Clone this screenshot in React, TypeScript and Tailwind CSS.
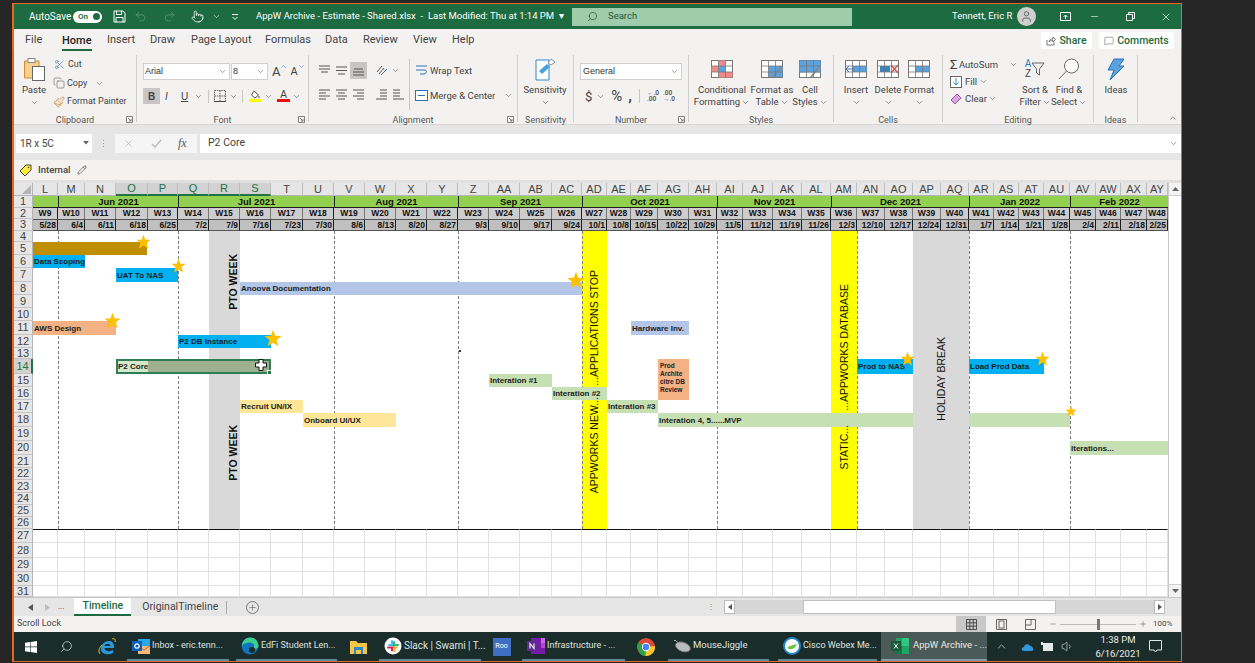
import { ChevronDown, ChevronUp, Copy, MessageSquare, Minus, Paintbrush, Pencil, Plus, Pointer, Redo2, Scissors, Search, Undo2, User, Volume1, X } from 'lucide-react'
import type { ReactNode } from 'react'

const COLS = ['L','M','N','O','P','Q','R','S','T','U','V','W','X','Y','Z','AA','AB','AC','AD','AE','AF','AG','AH','AI','AJ','AK','AL','AM','AN','AO','AP','AQ','AR','AS','AT','AU','AV','AW','AX','AY']
const SELECTED = ['O','P','Q','R','S']
const line = (name: string) => COLS.indexOf(name) + 2
const rowLine = (row: number) => row + 1

const MONTHS = [
  { label: '', from: 'L', to: 'L' },
  { label: 'Jun 2021', from: 'M', to: 'P' },
  { label: 'Jul 2021', from: 'Q', to: 'U' },
  { label: 'Aug 2021', from: 'V', to: 'Y' },
  { label: 'Sep 2021', from: 'Z', to: 'AC' },
  { label: 'Oct 2021', from: 'AD', to: 'AH' },
  { label: 'Nov 2021', from: 'AI', to: 'AL' },
  { label: 'Dec 2021', from: 'AM', to: 'AQ' },
  { label: 'Jan 2022', from: 'AR', to: 'AU' },
  { label: 'Feb 2022', from: 'AV', to: 'AY' },
]
const DATES = ['5/28','6/4','6/11','6/18','6/25','7/2','7/9','7/16','7/23','7/30','8/6','8/13','8/20','8/27','9/3','9/10','9/17','9/24','10/1','10/8','10/15','10/22','10/29','11/5','11/12','11/19','11/26','12/3','12/10','12/17','12/24','12/31','1/7','1/14','1/21','1/28','2/4','2/11','2/18','2/25']
const MONTH_STARTS = ['M','Q','V','Z','AD','AI','AM','AR','AV']
const DASHED = ['M','Q','V','Z','AD','AI','AN','AR','AV']

const BARS = [
  { from: 'L', to: 'O', row: 5, bg: 'bg-[#bf8f00]', text: '', w: 'w-[114px]' },
  { from: 'L', to: 'M', row: 6, bg: 'bg-[#00b0f0]', text: 'Data Scoping', w: '' },
  { from: 'O', to: 'P', row: 7, bg: 'bg-[#00b0f0]', text: 'UAT To NAS', w: '' },
  { from: 'S', to: 'AC', row: 8, bg: 'bg-[#b4c6e7]', text: 'Anoova Documentation', w: '' },
  { from: 'L', to: 'N', row: 11, bg: 'bg-[#f4b183]', text: 'AWS Design', w: '' },
  { from: 'Q', to: 'S', row: 12, bg: 'bg-[#00b0f0]', text: 'P2 DB Instance', w: '' },
  { from: 'AF', to: 'AG', row: 11, bg: 'bg-[#b4c6e7]', text: 'Hardware Inv.', w: '' },
  { from: 'AN', to: 'AO', row: 14, bg: 'bg-[#00b0f0]', text: 'Prod to NAS', w: '' },
  { from: 'AR', to: 'AT', row: 14, bg: 'bg-[#00b0f0]', text: 'Load Prod Data', w: '' },
  { from: 'AA', to: 'AB', row: 15, bg: 'bg-[#c6e0b4]', text: 'Interation #1', w: '' },
  { from: 'AC', to: 'AD', row: 16, bg: 'bg-[#c6e0b4]', text: 'Interation #2', w: '' },
  { from: 'AE', to: 'AF', row: 17, bg: 'bg-[#c6e0b4]', text: 'Interation #3', w: '' },
  { from: 'AG', to: 'AO', row: 18, bg: 'bg-[#c6e0b4]', text: 'Interation 4, 5......MVP', w: '' },
  { from: 'AR', to: 'AU', row: 18, bg: 'bg-[#c6e0b4]', text: '', w: '' },
  { from: 'S', to: 'T', row: 17, bg: 'bg-[#ffe699]', text: 'Recruit UN/IX', w: '' },
  { from: 'U', to: 'W', row: 18, bg: 'bg-[#ffe699]', text: 'Onboard UI/UX', w: '' },
  { from: 'AV', to: 'AY', row: 20, bg: 'bg-[#c6e0b4]', text: 'Iterations...', w: '' },
]

const BANDS = [
  { from: 'R', to: 'R', bg: 'bg-[#d9d9d9]' },
  { from: 'AD', to: 'AD', bg: 'bg-[#ffff00]' },
  { from: 'AM', to: 'AM', bg: 'bg-[#ffff00]' },
  { from: 'AP', to: 'AQ', bg: 'bg-[#d9d9d9]' },
]

const VERTICAL = [
  { text: 'PTO WEEK', col: 'R', to: 'R', row: 6, end: 9, cls: 'font-bold justify-end pr-[2px]' },
  { text: 'PTO WEEK', col: 'R', to: 'R', row: 18, end: 23, cls: 'font-bold justify-end pr-[2px]' },
  { text: '...APPLICATIONS STOP', col: 'AD', to: 'AD', row: 7, end: 15, cls: 'justify-center' },
  { text: 'APPWORKS NEW...', col: 'AD', to: 'AD', row: 17, end: 23, cls: 'justify-center pb-[3px]' },
  { text: '...APPWORKS DATABASE', col: 'AM', to: 'AM', row: 8, end: 17, cls: 'justify-center' },
  { text: 'STATIC...', col: 'AM', to: 'AM', row: 19, end: 21, cls: 'justify-center' },
  { text: 'HOLIDAY BREAK', col: 'AP', to: 'AQ', row: 12, end: 18, cls: 'justify-center pb-[5px]' },
]

const STARS = [
  { x: 143, y: 241, s: 15 }, { x: 178, y: 265, s: 15 }, { x: 112, y: 320, s: 17 }, { x: 273, y: 338, s: 18 },
  { x: 576, y: 280, s: 18 }, { x: 907, y: 358, s: 15 }, { x: 1042, y: 358, s: 15 }, { x: 1071, y: 411, s: 12 },
]

function Chev({ className = '' }: { className?: string }) {
  return <ChevronDown strokeWidth={1.5} className={`h-[9px] w-[9px] shrink-0 text-[#555] ${className}`} />
}

function Star({ x, y, s }: { x: number; y: number; s: number }) {
  return (
    <svg viewBox="0 0 24 24" width={s} height={s} className="absolute" style={{ left: x - 14 - s / 2, top: y - 183 - s / 2 }}>
      <polygon points="12,1 15,9 23.5,9.3 16.8,14.5 19.2,23 12,18.2 4.8,23 7.2,14.5 0.5,9.3 9,9" fill="#ffc000" />
    </svg>
  )
}

function Lines({ rows, className = '' }: { rows: [number, number, number][]; className?: string }) {
  return (
    <svg width="13" height="13" viewBox="0 0 13 13" className={`shrink-0 ${className}`}>
      {rows.map(([a, b, y], i) => <line key={i} x1={a} x2={b} y1={y} y2={y} stroke="#555" strokeWidth="1" />)}
    </svg>
  )
}

function Launcher() {
  return (
    <svg width="7" height="7" viewBox="0 0 7 7" className="absolute bottom-[-1px] right-[3px]">
      <path d="M0.5 0.5H6.5V6.5H0.5Z M2 2L5 5 M5 3V5H3" fill="none" stroke="#666" strokeWidth="0.8" />
    </svg>
  )
}

function Group({ label, launcher, className, children }: { label: string; launcher?: boolean; className: string; children: ReactNode }) {
  return (
    <div className={`relative mt-[3px] flex h-[67px] shrink-0 flex-col border-r border-[#cfcdcb] ${className}`}>
      <div className="flex h-[59px] shrink-0">{children}</div>
      <div className="mt-[1px] h-[10px] shrink-0 text-center text-[9px] leading-[10px] text-[#555]">{label}</div>
      {launcher && <Launcher />}
    </div>
  )
}

function BigBtn({ icon, a, b, className, chevA }: { icon: ReactNode; a: string; b?: string; className: string; chevA?: boolean }) {
  return (
    <div className={`flex shrink-0 flex-col items-center ${className}`}>
      <div className="mt-[2px] flex h-[24px] items-center justify-center">{icon}</div>
      <div className="mt-[3px] whitespace-nowrap text-[9.5px] leading-[12px] text-[#444]">{a}</div>
      {b ? (
        <div className="flex items-center whitespace-nowrap text-[9.5px] leading-[12px] text-[#444]">{b}<Chev className="ml-[1px] h-[8px] w-[8px]" /></div>
      ) : chevA !== false ? <Chev className="mt-[2px]" /> : null}
    </div>
  )
}

function TableIcon({ children, w = 22, h = 18 }: { children?: ReactNode; w?: number; h?: number }) {
  return (
    <svg width={w} height={h} viewBox="0 0 22 18">
      <rect x="0.5" y="0.5" width="21" height="17" fill="#fff" stroke="#777" />
      {children}
      <path d="M0.5 6H21.5 M0.5 12H21.5 M7.5 0.5V17.5 M14.5 0.5V17.5" stroke="#777" strokeWidth="0.8" fill="none" />
    </svg>
  )
}

function TaskItem({ icon, text, className, size = 'text-[9px]' }: { icon: ReactNode; text: string; className: string; size?: string }) {
  return (
    <div className={`flex h-full shrink-0 items-center gap-[2px] border-b-2 border-[#5f8ba0] pl-[5px] ${className}`}>
      <div className="flex h-[18px] w-[18px] shrink-0 items-center justify-center">{icon}</div>
      <span className={`whitespace-nowrap text-[#dfe5e3] ${size}`}>{text}</span>
    </div>
  )
}

function Sheet() {
  return (
    <div className="relative flex h-[414px] shrink-0">
      <div className="grid w-[1154px] grid-cols-[19px_25px_27px_31px_32px_30px_31px_31px_31px_32px_31px_31px_31px_31px_31px_31px_31px_32px_30px_25px_24px_27px_31px_28px_26px_30px_29px_29px_26px_28px_28px_28px_28px_25px_25px_25px_26px_26px_25px_26px_21px] grid-rows-[13px_12px_11px_12px_11px_13px_13px_14px_13px_13px_13px_14px_13px_11px_15px_13px_13px_13px_14px_14px_14px_13px_12px_13px_12px_12px_12px_14px_15px_14px_14px_11px] overflow-hidden bg-white font-['Liberation_Sans',sans-serif]">
        {/* corner and column headers */}
        <div className="flex items-end justify-end border-b border-r border-[#b5b5b5] bg-[#e6e6e6] pb-[1px] pr-[1px]">
          <svg width="9" height="9" viewBox="0 0 9 9"><polygon points="9,0 9,9 0,9" fill="#b5b5b5" /></svg>
        </div>
        {COLS.map((c) => (
          <div key={c} className={`flex items-center justify-center border-r border-[#bdbdbd] text-[11px] leading-none ${SELECTED.includes(c) ? 'border-b-2 border-b-[#217346] bg-[#d2d2d2] text-[#217346]' : 'border-b border-b-[#b5b5b5] bg-[#e6e6e6] text-[#444]'}`}>{c}</div>
        ))}
        {/* row headers */}
        {Array.from({ length: 31 }, (_, i) => i + 1).map((n) => (
          <div key={n} className={`col-start-1 flex items-center justify-center border-b border-[#c4c4c4] text-[11px] leading-none ${n === 14 ? 'border-r-2 border-r-[#217346] bg-[#d2d2d2] text-[#217346]' : 'border-r border-r-[#b5b5b5] bg-[#e6e6e6] text-[#444]'}`} style={{ gridRow: rowLine(n) }}>{n}</div>
        ))}
        {/* month, week, date rows */}
        {MONTHS.map((m) => (
          <div key={m.from} className={`flex items-center justify-center whitespace-nowrap border-b border-[#1f1f1f] bg-[#92d050] text-[9.5px] font-bold leading-none text-[#111] ${m.label ? 'border-l border-l-[#1f1f1f]' : ''}`} style={{ gridRow: 2, gridColumn: `${line(m.from)} / ${line(m.to) + 1}` }}>{m.label}</div>
        ))}
        {COLS.map((c, i) => (
          <div key={c} className={`flex items-center justify-center border-r border-[#777] bg-[#cdcdcd] text-[8.5px] font-bold leading-none text-[#111] ${MONTH_STARTS.includes(COLS[i + 1]) ? 'border-r-[#1f1f1f]' : ''}`} style={{ gridRow: 3, gridColumn: i + 2 }}>W{i + 9}</div>
        ))}
        {COLS.map((c, i) => (
          <div key={c} className="flex items-center justify-end overflow-hidden border-y border-r border-y-[#555] border-r-[#1f1f1f] bg-[#c0c0c0] pr-[1px] text-[8.5px] font-bold leading-none text-[#111]" style={{ gridRow: 4, gridColumn: i + 2 }}>{DATES[i]}</div>
        ))}
        {/* empty cells below the plan */}
        {[27, 28, 29, 30, 31].flatMap((r) => COLS.map((c, i) => (
          <div key={`${r}${c}`} className={`border-b border-r border-[#e0e0e0] ${r === 27 ? 'border-t border-t-[#111]' : ''}`} style={{ gridRow: rowLine(r), gridColumn: i + 2 }} />
        )))}
        {/* shaded week bands */}
        {BANDS.map((b) => (
          <div key={b.from} className={b.bg} style={{ gridRow: `${rowLine(4)} / ${rowLine(27)}`, gridColumn: `${line(b.from)} / ${line(b.to) + 1}` }} />
        ))}
        {/* month boundaries */}
        {DASHED.map((c) => (
          <div key={c} className="w-0 border-l border-dashed border-[#7f7f7f]" style={{ gridRow: `${rowLine(4)} / ${rowLine(27)}`, gridColumn: line(c) }} />
        ))}
        {/* task bars */}
        {BARS.map((b) => (
          <div key={`${b.from}${b.row}`} className={`flex items-center overflow-hidden whitespace-nowrap pl-[1px] pt-[1px] text-[8px] font-bold leading-none text-[#1c1c1c] ${b.bg} ${b.w}`} style={{ gridRow: rowLine(b.row), gridColumn: `${line(b.from)} / ${line(b.to) + 1}` }}>{b.text}</div>
        ))}
        <div className="whitespace-normal bg-[#f4b183] px-[2px] pt-[3px] text-[6.5px] font-bold leading-[8px] text-[#222]" style={{ gridRow: `${rowLine(14)} / ${rowLine(17)}`, gridColumn: line('AG') }}>Prod Archite citre DB Review</div>
        {/* selected range */}
        <div className="relative flex border-2 border-[#2e7d55] text-[8px] font-bold leading-none text-[#1c1c1c]" style={{ gridRow: rowLine(14), gridColumn: `${line('O')} / ${line('S') + 1}` }}>
          <div className="flex w-[30px] shrink-0 items-center whitespace-nowrap bg-[#d5e8c9] pt-[1px]">P2 Core</div>
          <div className="flex-1 bg-[#9fb08f]" />
          <div className="absolute bottom-[-3px] right-[-3px] h-[5px] w-[5px] border border-white bg-[#217346]" />
        </div>
        {/* vertical labels */}
        {VERTICAL.map((v) => (
          <div key={v.text + v.row} className={`flex items-center overflow-visible ${v.cls}`} style={{ gridRow: `${rowLine(v.row)} / ${rowLine(v.end) + 1}`, gridColumn: `${line(v.col)} / ${line(v.to) + 1}` }}>
            <span className="rotate-180 whitespace-nowrap text-[10.5px] leading-none text-[#111] [writing-mode:vertical-rl]">{v.text}</span>
          </div>
        ))}
      </div>
      {/* vertical scroll bar */}
      <div className="flex w-[13px] shrink-0 flex-col border-l border-[#c8c8c8] bg-white">
        <div className="flex h-[13px] items-center justify-center border-b border-[#d0d0d0] bg-[#f3f3f3]"><svg width="7" height="4"><polygon points="3.5,0 7,4 0,4" fill="#666" /></svg></div>
        <div className="flex-1" />
        <div className="flex h-[13px] items-center justify-center border-t border-[#d0d0d0] bg-[#f3f3f3]"><svg width="7" height="4"><polygon points="0,0 7,0 3.5,4" fill="#666" /></svg></div>
      </div>
      {STARS.map((s) => <Star key={s.x} {...s} />)}
      {/* move cursor over the selection */}
      <svg width="12" height="12" viewBox="0 0 12 12" className="absolute left-[241px] top-[176px]">
        <path d="M4 0.5H8V4H11.5V8H8V11.5H4V8H0.5V4H4Z" fill="#fff" stroke="#111" strokeWidth="1" />
      </svg>
      <div className="absolute left-[445px] top-[167px] h-[2px] w-[2px] bg-[#333]" />
    </div>
  )
}

export default function App() {
  return (
    <div className="h-[663px] w-[1255px] overflow-hidden bg-[#262626] pl-[12px] pt-[3px] font-['Roboto',sans-serif]">
      <div className="flex h-[659px] w-[1170px] flex-col border-b border-l-2 border-r border-t border-[#e8671f] bg-[#f3f2f1]">
        {/* title bar */}
        <div className="flex h-[25px] shrink-0 items-center bg-[#1d6b40] text-[9.5px] text-white">
          <span className="ml-[15px] w-[43px] whitespace-nowrap text-[10px]">AutoSave</span>
          <div className="ml-[1px] flex h-[12px] w-[29px] items-center justify-between rounded-full bg-white pl-[5px] pr-[2px] text-[8px] font-semibold leading-none text-[#1d6b40]">On<span className="h-[7px] w-[7px] rounded-full bg-[#1d6b40]" /></div>
          <svg width="13" height="13" viewBox="0 0 13 13" className="ml-[11px] text-white"><path d="M1 1H10L12 3V12H1Z M3.5 1V4.5H8.5V1 M3 12V7.5H10V12" fill="none" stroke="currentColor" strokeWidth="1" /></svg>
          <Undo2 className="ml-[8px] h-[13px] w-[13px] text-[#5f9a7c]" strokeWidth={1.5} />
          <Chev className="ml-[2px] h-[7px] w-[7px] text-[#5f9a7c]" />
          <Redo2 className="ml-[5px] h-[13px] w-[13px] text-[#5f9a7c]" strokeWidth={1.5} />
          <Chev className="ml-[2px] h-[7px] w-[7px] text-[#5f9a7c]" />
          <Pointer className="ml-[4px] h-[13px] w-[13px]" strokeWidth={1.4} />
          <Chev className="ml-[8px] h-[8px] w-[8px] text-white" />
          <svg width="8" height="8" viewBox="0 0 8 8" className="ml-[10px]"><path d="M1 1.5H7 M1.5 4L4 6.5L6.5 4" fill="none" stroke="#fff" strokeWidth="1" /></svg>
          <span className="ml-[17px] w-[296px] whitespace-pre">AppW Archive - Estimate - Shared.xlsx  -  Last Modified: Thu at 1:14 PM  ▾</span>
          <div className="ml-[20px] flex h-[18px] w-[280px] items-center bg-[#9fcdac] pl-[15px] text-[#1d5a38]">
            <Search className="h-[11px] w-[11px] -scale-x-100" strokeWidth={1.5} />
            <span className="ml-[10px]">Search</span>
          </div>
          <span className="ml-[100px] w-[64px] whitespace-nowrap">Tennett, Eric R</span>
          <div className="ml-[1px] flex h-[19px] w-[19px] items-center justify-center rounded-full bg-[#cfcfcf]"><User className="h-[13px] w-[13px] text-[#555]" strokeWidth={1.5} /></div>
          <svg width="11" height="9" viewBox="0 0 11 9" className="ml-[24px]"><path d="M0.5 0.5H10.5V8.5H0.5Z" fill="none" stroke="#fff" /><path d="M5.5 7V3M3.5 5L5.5 3L7.5 5" fill="none" stroke="#fff" /></svg>
          <Minus className="ml-[18px] h-[11px] w-[11px]" strokeWidth={1.3} />
          <svg width="9" height="9" viewBox="0 0 9 9" className="ml-[26px]"><path d="M0.5 2.5H6.5V8.5H0.5Z M2.5 2.5V0.5H8.5V6.5H6.5" fill="none" stroke="#fff" /></svg>
          <X className="ml-[25px] h-[12px] w-[12px]" strokeWidth={1.3} />
        </div>
        {/* ribbon tabs */}
        <div className="flex h-[23px] shrink-0 items-center pl-[11px] text-[11px] text-[#444]">
          <span className="w-[37px]">File</span>
          <span className="w-[45px]"><span className="inline-block h-[21px] border-b-2 border-[#1d6b40] pt-[3px] font-medium text-[#222]">Home</span></span>
          <span className="w-[43px]">Insert</span>
          <span className="w-[41px]">Draw</span>
          <span className="w-[74px]">Page Layout</span>
          <span className="w-[60px]">Formulas</span>
          <span className="w-[38px]">Data</span>
          <span className="w-[50px]">Review</span>
          <span className="w-[39px]">View</span>
          <span>Help</span>
          <div className="ml-auto flex h-[17px] w-[51px] items-center justify-center gap-[3px] rounded-[2px] bg-white text-[10.5px] font-medium text-[#1d6b40]">
            <svg width="10" height="10" viewBox="0 0 10 10"><path d="M1 4V9H8V6 M3 6C3 4 5 3 7 3V1L9.5 3.5L7 6V4.5C5 4.5 4 5 3 6Z" fill="none" stroke="#555" strokeWidth="0.8" /></svg>
            Share
          </div>
          <div className="ml-[7px] mr-[7px] flex h-[17px] w-[75px] items-center justify-center gap-[3px] rounded-[2px] bg-white text-[10.5px] font-medium text-[#1d6b40]">
            <MessageSquare className="h-[10px] w-[10px] text-[#555]" strokeWidth={1.2} />
            Comments
          </div>
        </div>
        {/* ribbon */}
        <div className="flex h-[73px] shrink-0 border-b border-[#d8d6d4] shadow-[0_1px_2px_rgba(0,0,0,0.12)]">
          <Group label="Clipboard" launcher className="w-[123px]">
            <div className="ml-[6px]">
              <BigBtn className="w-[28px]" a="Paste" icon={
                <svg width="22" height="24" viewBox="0 0 22 24"><path d="M1.5 4H16V21H1.5Z" fill="#f5d08e" stroke="#d18a2c" /><rect x="5" y="1.5" width="7" height="4" fill="#fff" stroke="#888" /><rect x="9.5" y="9.5" width="12" height="14" fill="#fff" stroke="#666" /></svg>
              } />
            </div>
            <div className="ml-[5px] mt-[2px] flex flex-col gap-[3.5px] text-[9px] leading-[15px] text-[#444]">
              <div className="flex items-center gap-[3px] pl-[1px]"><Scissors className="h-[11px] w-[11px] text-[#3c6fa8]" strokeWidth={1.2} />Cut</div>
              <div className="flex items-center gap-[2px]"><Copy className="h-[12px] w-[12px] text-[#555]" strokeWidth={1.1} />Copy<Chev className="ml-[6px]" /></div>
              <div className="flex items-center gap-[2px] whitespace-nowrap"><Paintbrush className="h-[12px] w-[12px] text-[#d07a26]" strokeWidth={1.4} />Format Painter</div>
            </div>
          </Group>
          <Group label="Font" launcher className="w-[172px]">
            <div className="ml-[6px] mt-[8px] flex flex-col gap-[8px]">
              <div className="flex h-[17px] items-center">
                <div className="flex h-full w-[87px] items-center justify-between border border-[#d2d0ce] bg-white pl-[1px] pr-[2px] font-['Liberation_Sans',sans-serif] text-[9px] text-[#333]">Arial<Chev /></div>
                <div className="ml-[1px] flex h-full w-[37px] items-center justify-between border border-[#d2d0ce] bg-white pl-[1px] pr-[2px] font-['Liberation_Sans',sans-serif] text-[9px] text-[#333]">8<Chev /></div>
                <span className="ml-[4px] text-[13px] leading-none text-[#444]">A</span><ChevronUp className="h-[7px] w-[7px] self-start text-[#2f72b5]" strokeWidth={2} />
                <span className="ml-[3px] text-[11px] leading-none text-[#444]">A</span><ChevronDown className="h-[7px] w-[7px] self-start text-[#2f72b5]" strokeWidth={2} />
              </div>
              <div className="flex h-[16px] items-center font-['Liberation_Sans',sans-serif] text-[10px] text-[#444]">
                <span className="flex h-full w-[17px] items-center justify-center bg-[#c8c6c4] font-bold">B</span>
                <span className="ml-[5px] w-[8px] italic">I</span>
                <span className="ml-[8px] w-[8px] underline">U</span>
                <Chev className="ml-[5px]" />
                <div className="ml-[5px] h-[13px] w-px bg-[#c8c6c4]" />
                <svg width="12" height="12" viewBox="0 0 12 12" className="ml-[5px]"><path d="M0.5 0.5H11.5V11.5H0.5Z M6 0.5V11.5 M0.5 6H11.5" fill="none" stroke="#666" strokeDasharray="1.5 0.8" /><path d="M0.5 11.5H11.5" stroke="#444" /></svg>
                <Chev className="ml-[3px]" />
                <div className="ml-[4px] h-[13px] w-px bg-[#c8c6c4]" />
                <div className="ml-[6px] flex w-[12px] flex-col items-center"><svg width="10" height="9" viewBox="0 0 10 9"><path d="M4 1L8.5 5L5 8L1.5 5Z" fill="#fff" stroke="#555" /><path d="M9 6V8" stroke="#555" /></svg><div className="h-[3px] w-[12px] bg-[#ffff00]" /></div>
                <Chev className="ml-[3px]" />
                <div className="ml-[4px] flex w-[13px] flex-col items-center leading-[9px]"><span className="text-[10px]">A</span><div className="h-[3px] w-[13px] bg-[#e60f0f]" /></div>
                <Chev className="ml-[2px]" />
              </div>
            </div>
          </Group>
          <Group label="Alignment" launcher className="w-[209px]">
            <div className="ml-[9px] mt-[7px] flex w-[91px] flex-col gap-[9px]">
              <div className="flex h-[17px] items-center">
                <Lines rows={[[1, 12, 2], [1, 12, 5], [3, 10, 8]]} />
                <Lines className="ml-[4px]" rows={[[1, 12, 3], [1, 12, 6.5], [3, 10, 10]]} />
                <div className="ml-[2px] flex h-[17px] w-[17px] items-center justify-center bg-[#c8c6c4]"><Lines rows={[[2, 11, 5], [1, 12, 8], [1, 12, 11]]} /></div>
                <svg width="13" height="13" viewBox="0 0 13 13" className="ml-[8px]"><path d="M2 8L7 2M4 10L9 4" stroke="#555" fill="none" /><path d="M6 11L12 5" stroke="#2f72b5" fill="none" /></svg>
                <Chev className="ml-[3px]" />
              </div>
              <div className="flex h-[13px] items-center">
                <Lines rows={[[1, 12, 2], [1, 8, 5], [1, 12, 8], [1, 8, 11]]} />
                <Lines className="ml-[4px]" rows={[[1, 12, 2], [3, 10, 5], [1, 12, 8], [3, 10, 11]]} />
                <Lines className="ml-[4px]" rows={[[1, 12, 2], [5, 12, 5], [1, 12, 8], [5, 12, 11]]} />
                <Lines className="ml-[10px]" rows={[[5, 12, 2], [5, 12, 5], [5, 12, 8], [1, 12, 11]]} />
                <Lines className="ml-[4px]" rows={[[1, 8, 2], [1, 8, 5], [1, 8, 8], [1, 12, 11]]} />
              </div>
            </div>
            <div className="my-[4px] w-px bg-[#c8c6c4]" />
            <div className="ml-[5px] mt-[8px] flex flex-col gap-[10px] whitespace-nowrap text-[9.5px] leading-[15px] text-[#444]">
              <div className="flex items-center gap-[2px]">
                <svg width="13" height="13" viewBox="0 0 13 13"><path d="M1 2H12 M1 6H10C12 6 12 10 9 10H5" fill="none" stroke="#2f72b5" /></svg>Wrap Text
              </div>
              <div className="flex items-center gap-[2px]">
                <svg width="13" height="13" viewBox="0 0 13 13"><rect x="0.5" y="1.5" width="12" height="10" fill="#fff" stroke="#2f72b5" /><path d="M3 6.5H10" stroke="#2f72b5" /></svg>Merge &amp; Center<Chev className="ml-[7px]" />
              </div>
            </div>
          </Group>
          <Group label="Sensitivity" className="w-[56px]">
            <BigBtn className="w-[54px]" a="Sensitivity" icon={
              <svg width="21" height="24" viewBox="0 0 21 24"><path d="M1 3H14V23H1Z" fill="#fff" stroke="#2f87c8" /><path d="M4 14L12 7L15 10L7 17Z" fill="#4aa0dc" /><path d="M13 6L16 2L20 5L16 8Z" fill="#fff" stroke="#777" strokeWidth="0.8" /></svg>
            } />
          </Group>
          <Group label="Number" launcher className="w-[115px]">
            <div className="ml-[6px] mt-[8px] flex flex-col gap-[6px]">
              <div className="flex h-[17px] w-[102px] items-center justify-between border border-[#d2d0ce] bg-white pl-[2px] pr-[2px] font-['Liberation_Sans',sans-serif] text-[9px] text-[#333]">General<Chev /></div>
              <div className="flex h-[20px] items-center text-[#444]">
                <span className="ml-[5px] text-[13px] leading-none">$</span>
                <Chev className="ml-[4px]" />
                <span className="ml-[6px] text-[15px] leading-none">%</span>
                <span className="ml-[6px] text-[15px] font-bold leading-none">,</span>
                <div className="ml-[7px] h-[14px] w-px bg-[#c8c6c4]" />
                <span className="ml-[7px] w-[13px] text-[6.5px] font-semibold leading-[6.5px] text-[#555]"><span className="text-[#2f72b5]">←</span>.0<br />.00</span>
                <span className="ml-[3px] w-[13px] text-[6.5px] font-semibold leading-[6.5px] text-[#555]">.00<br /><span className="text-[#2f72b5]">→</span>.0</span>
              </div>
            </div>
          </Group>
          <Group label="Styles" className="w-[145px]">
            <BigBtn className="ml-[2px] w-[62px]" a="Conditional" b="Formatting" icon={
              <TableIcon><rect x="7.5" y="0.5" width="7" height="5.5" fill="#f08a8a" /><rect x="0.5" y="6" width="7" height="6" fill="#f08a8a" /><rect x="7.5" y="6" width="7" height="6" fill="#5ba3de" /><rect x="7.5" y="12" width="14" height="5.5" fill="#f08a8a" /></TableIcon>
            } />
            <BigBtn className="w-[38px]" a="Format as" b="Table" icon={
              <TableIcon><rect x="7.5" y="6" width="14" height="11" fill="#5ba3de" /><path d="M12 17L20 7" stroke="#888" strokeWidth="2" /></TableIcon>
            } />
            <BigBtn className="w-[38px]" a="Cell" b="Styles" icon={
              <TableIcon><rect x="0.5" y="0.5" width="21" height="12" fill="#5ba3de" /><path d="M12 17L20 7" stroke="#888" strokeWidth="2" /></TableIcon>
            } />
          </Group>
          <Group label="Cells" className="w-[109px]">
            <BigBtn className="ml-[6px] w-[32px]" a="Insert" icon={
              <TableIcon><rect x="7" y="6" width="14.5" height="6" fill="#5ba3de" /><path d="M1 9H9M4 6L1 9L4 12" stroke="#2f72b5" fill="none" /></TableIcon>
            } />
            <BigBtn className="w-[32px]" a="Delete" icon={
              <TableIcon><rect x="3" y="6" width="10" height="6" fill="#2f87c8" /><path d="M14 5L21 13M21 5L14 13" stroke="#e0463a" strokeWidth="1.2" /></TableIcon>
            } />
            <BigBtn className="w-[30px]" a="Format" icon={
              <TableIcon><rect x="7" y="6" width="14.5" height="6" fill="#5ba3de" /></TableIcon>
            } />
          </Group>
          <Group label="Editing" className="w-[151px]">
            <div className="ml-[7px] flex w-[68px] flex-col gap-[2px] whitespace-nowrap pt-[2px] text-[9.5px] leading-[15px] text-[#444]">
              <div className="flex items-center"><span className="w-[15px] text-[13px] leading-none">Σ</span>AutoSum<Chev className="ml-[11px]" /></div>
              <div className="flex items-center">
                <svg width="12" height="12" viewBox="0 0 12 12" className="mr-[3px]"><rect x="0.5" y="0.5" width="11" height="11" fill="#fff" stroke="#666" /><path d="M6 2V9M3.5 6.5L6 9L8.5 6.5" stroke="#2f87c8" fill="none" /></svg>
                Fill<Chev className="ml-[2px]" />
              </div>
              <div className="flex items-center">
                <svg width="12" height="12" viewBox="0 0 12 12" className="mr-[3px]"><path d="M1 7L7 1L11 5L5 11Z" fill="#d9a6dd" stroke="#a84fb0" /></svg>
                Clear<Chev className="ml-[1px]" />
              </div>
            </div>
            <BigBtn className="w-[34px]" a="Sort &" b="Filter" icon={
              <div className="flex items-center leading-[10px]"><div className="flex flex-col items-center text-[10px] text-[#2f72b5]">A<span className="text-[#444]">Z</span></div><svg width="14" height="14" viewBox="0 0 14 14"><path d="M1 1H13L8.5 7V13L5.5 11V7Z" fill="none" stroke="#666" /></svg></div>
            } />
            <BigBtn className="w-[34px]" a="Find &" b="Select" icon={
              <svg width="22" height="22" viewBox="0 0 22 22"><circle cx="13.5" cy="8" r="7" fill="#fff" stroke="#666" /><path d="M8.5 13L1 21" stroke="#666" /></svg>
            } />
          </Group>
          <Group label="Ideas" className="w-[44px]">
            <BigBtn className="w-[44px]" chevA={false} a="Ideas" icon={
              <svg width="18" height="23" viewBox="0 0 18 23"><path d="M7 1H17L12 8H17L3 22L7 12H1Z" fill="#5ba3de" stroke="#2f72b5" /></svg>
            } />
          </Group>
          <div className="flex flex-1 items-end justify-end pb-[1px] pr-[3px]"><ChevronUp className="h-[10px] w-[10px] text-[#555]" strokeWidth={1.5} /></div>
        </div>
        {/* formula bar */}
        <div className="flex h-[35px] shrink-0 items-center bg-[#e6e6e6] pl-[2px] pt-[1px] text-[10px] text-[#444]">
          <div className="flex h-[19px] w-[76px] items-center justify-between bg-white pl-[4px] pr-[3px]">1R x 5C<svg width="6" height="4"><polygon points="0,0 6,0 3,3.5" fill="#666" /></svg></div>
          <div className="ml-[11px] flex flex-col gap-[2px]"><span className="h-[1px] w-[1px] bg-[#999]" /><span className="h-[1px] w-[1px] bg-[#999]" /><span className="h-[1px] w-[1px] bg-[#999]" /></div>
          <div className="ml-[11px] flex h-[19px] w-[82px] items-center bg-[#f5f5f5] pl-[8px]">
            <X className="h-[11px] w-[11px] text-[#aaa]" strokeWidth={1.4} />
            <svg width="11" height="9" viewBox="0 0 11 9" className="ml-[17px]"><path d="M1 5L4 8L10 1" fill="none" stroke="#bbb" strokeWidth="1.4" /></svg>
            <span className="ml-[16px] font-['Liberation_Serif',serif] text-[12px] italic leading-none text-[#555]">fx</span>
          </div>
          <div className="ml-[3px] flex h-[19px] flex-1 items-center justify-between bg-white pl-[8px] pr-[3px] text-[10.5px]">P2 Core<Chev /></div>
        </div>
        {/* sensitivity label bar */}
        <div className="flex h-[20px] shrink-0 items-center bg-[#f3f2f1] pl-[5px] text-[9.5px] font-medium text-[#444]">
          <svg width="13" height="13" viewBox="0 0 13 13"><path d="M1 7L7 1H12V6L6 12Z" fill="#ffeb3b" stroke="#444" /><circle cx="9.5" cy="3.5" r="0.8" fill="#444" /></svg>
          <span className="ml-[6px]">Internal</span>
          <Pencil className="ml-[7px] h-[10px] w-[10px] text-[#444]" strokeWidth={1.5} />
        </div>
        <div className="h-[3px] shrink-0 bg-[#e0e0e0]" />
        <Sheet />
        {/* sheet tabs */}
        <div className="flex h-[19px] shrink-0 items-center border-t border-[#c8c8c8] bg-[#e6e6e6] text-[10.5px] text-[#444]">
          <svg width="5" height="7" className="ml-[14px]"><polygon points="5,0 5,7 0,3.5" fill="#555" /></svg>
          <svg width="5" height="7" className="ml-[12px]"><polygon points="0,0 0,7 5,3.5" fill="#bbb" /></svg>
          <span className="ml-[8px] text-[8px]">...</span>
          <div className="ml-[10px] flex h-full w-[57px] items-center justify-center border-b-2 border-[#1d6b40] bg-white font-medium text-[#1d6b40]">Timeline</div>
          <span className="ml-[11px] w-[84px]">OriginalTimeline</span>
          <div className="h-[13px] w-px bg-[#aaa]" />
          <div className="ml-[19px] flex h-[13px] w-[13px] items-center justify-center rounded-full border border-[#777]"><Plus className="h-[9px] w-[9px] text-[#555]" strokeWidth={1.5} /></div>
          <span className="ml-[448px] text-[8px] leading-none text-[#888]">⋮</span>
          <div className="ml-[9px] flex h-[14px] w-[11px] items-center justify-center border border-[#bbb] bg-white"><svg width="4" height="6"><polygon points="4,0 4,6 0,3" fill="#555" /></svg></div>
          <div className="flex h-[14px] w-[419px] bg-[#d6d6d6] pl-[68px]"><div className="h-full w-[253px] border border-[#c0c0c0] bg-white" /></div>
          <div className="flex h-[14px] w-[11px] items-center justify-center border border-[#bbb] bg-white"><svg width="4" height="6"><polygon points="0,0 0,6 4,3" fill="#555" /></svg></div>
        </div>
        {/* status bar */}
        <div className="flex h-[16px] shrink-0 items-center bg-[#f3f2f1] pl-[3px] text-[9px] text-[#444]">
          <span>Scroll Lock</span>
          <div className="ml-auto flex h-full items-center">
            <div className="flex h-full w-[30px] items-center justify-center bg-[#c8c8c8]"><svg width="11" height="11" viewBox="0 0 11 11"><path d="M0.5 0.5H10.5V10.5H0.5Z M3.8 0.5V10.5 M7.2 0.5V10.5 M0.5 3.8H10.5 M0.5 7.2H10.5" fill="none" stroke="#333" strokeWidth="0.8" /></svg></div>
            <svg width="11" height="11" viewBox="0 0 11 11" className="ml-[10px]"><path d="M0.5 0.5H10.5V10.5H0.5Z" fill="none" stroke="#666" /><rect x="3" y="2" width="5" height="7" fill="none" stroke="#666" /></svg>
            <svg width="11" height="11" viewBox="0 0 11 11" className="ml-[18px]"><path d="M0.5 0.5H10.5V10.5H0.5Z M6 0.5V6H0.5" fill="none" stroke="#666" /></svg>
            <Minus className="ml-[13px] h-[8px] w-[8px] text-[#555]" strokeWidth={1.5} />
            <div className="relative ml-[3px] h-px w-[76px] bg-[#bbb]"><div className="absolute left-[37px] top-[-5px] h-[11px] w-[3px] bg-[#777]" /></div>
            <Plus className="ml-[3px] h-[8px] w-[8px] text-[#555]" strokeWidth={1.5} />
            <span className="ml-[6px] mr-[7px] w-[21px] text-[8px]">100%</span>
          </div>
        </div>
        {/* windows taskbar */}
        <div className="flex h-[29px] shrink-0 items-center bg-[#1b2d2a]">
          <div className="flex h-full w-[32px] items-center justify-center pl-[1px]">
            <svg width="12" height="12" viewBox="0 0 12 12"><path d="M0 1.7L5 1V5.6H0Z M5.6 0.9L12 0V5.6H5.6Z M0 6.2H5V11L0 10.3Z M5.6 6.2H12V12L5.6 11.1Z" fill="#fff" /></svg>
          </div>
          <div className="flex h-full w-[41px] items-center justify-center"><Search className="h-[13px] w-[13px] -scale-x-100 text-[#dfe5e3]" strokeWidth={1.3} /></div>
          <div className="flex h-full w-[40px] items-center justify-center">
            <svg width="18" height="18" viewBox="0 0 18 18"><path d="M3 11C3 6 7 3 11 3C14 3 16 5 16 9V10H6.5C6.5 13 10 14.5 15 12V15C9 17.5 3 16 3 11Z M6.5 8H12.5C12.5 5 7 5 6.5 8Z" fill="#2a9ae0" fillRule="evenodd" /><path d="M14 1C16 0 18 1 17 4M2 16C0 14 1 10 4 7" fill="none" stroke="#f2c12e" strokeWidth="1" /></svg>
          </div>
          <TaskItem className="w-[102px]" text="Inbox - eric.tenn..." icon={
            <svg width="18" height="18" viewBox="0 0 18 18"><rect x="6" y="2" width="12" height="10" fill="#28a8ea" /><rect x="6" y="9" width="12" height="8" fill="#f3b77c" /><path d="M6 9L12 13L18 9" fill="none" stroke="#b97433" /><rect x="0" y="4" width="10" height="10" fill="#0f5fb5" /><circle cx="5" cy="9" r="2.2" fill="none" stroke="#fff" strokeWidth="1.2" /></svg>
          } />
          <div className="w-[7px] shrink-0" />
          <TaskItem className="w-[101px]" text="EdFi Student Len..." icon={
            <svg width="18" height="18" viewBox="0 0 18 18"><circle cx="9" cy="9" r="8.5" fill="#0f75bd" /><path d="M1 9C1 4 5 0.5 9 0.5C14 0.5 17.5 4 17.5 9.5C17.5 11 15 12 12.5 11.5C14 9 13 6 9 5.5C5 5.5 2 7 1 9Z" fill="#3ccf91" /><circle cx="11" cy="13" r="3" fill="#1b2d2a" /></svg>
          } />
          <div className="flex h-full w-[42px] shrink-0 items-center justify-center">
            <svg width="17" height="15" viewBox="0 0 17 15"><path d="M0 2H6L8 4H17V15H0Z" fill="#f6c544" /><rect x="4" y="8" width="9" height="7" fill="#2f87c8" /><rect x="6" y="11" width="5" height="4" fill="#f6c544" /></svg>
          </div>
          <TaskItem className="w-[102px]" size="text-[10px]" text="Slack | Swami | T..." icon={
            <svg width="18" height="18" viewBox="0 0 18 18"><circle cx="9" cy="9" r="8.5" fill="#fff" /><rect x="4" y="7" width="6" height="2" rx="1" fill="#36c5f0" /><rect x="7" y="3" width="2" height="6" rx="1" fill="#36c5f0" /><rect x="9" y="4" width="2" height="6" rx="1" fill="#2eb67d" /><rect x="9" y="7" width="6" height="2" rx="1" fill="#2eb67d" /><rect x="8" y="9.5" width="6" height="2" rx="1" fill="#ecb22e" /><rect x="9.5" y="9.5" width="2" height="6" rx="1" fill="#ecb22e" /><rect x="3" y="9.5" width="6" height="2" rx="1" fill="#e01e5a" /><rect x="7" y="9.5" width="2" height="5" rx="1" fill="#e01e5a" /></svg>
          } />
          <div className="flex h-full w-[41px] shrink-0 items-center justify-center">
            <span className="flex h-[18px] w-[18px] items-center justify-center bg-[#3e6fc4] text-[7px] leading-none text-white">Roo</span>
          </div>
          <TaskItem className="w-[103px]" text="Infrastructure - ..." icon={
            <svg width="18" height="18" viewBox="0 0 18 18"><rect x="4" y="1" width="14" height="16" fill="#7719aa" /><rect x="14" y="1" width="4" height="5" fill="#ca64ea" /><rect x="14" y="6" width="4" height="5" fill="#ae4bd5" /><rect x="0" y="4" width="10" height="10" fill="#5d2a90" /><path d="M3 11.5V6.5L7 11.5V6.5" fill="none" stroke="#fff" strokeWidth="1.1" /></svg>
          } />
          <div className="flex h-full w-[41px] shrink-0 items-center justify-center">
            <svg width="18" height="18" viewBox="0 0 18 18"><circle cx="9" cy="9" r="9" fill="#de4a3c" /><path d="M9 9L2 13.5A9 9 0 0 1 1.3 4.5Z M9 9L8 18A9 9 0 0 1 1.5 14Z" fill="#2ba24c" /><path d="M9 9L18 8A9 9 0 0 1 8.5 18Z" fill="#fbc72e" /><circle cx="9" cy="9" r="4.2" fill="#fff" /><circle cx="9" cy="9" r="3.2" fill="#4285f4" /></svg>
          </div>
          <div className="w-[2px] shrink-0" />
          <TaskItem className="w-[101px]" size="text-[9.5px]" text="MouseJiggle" icon={
            <svg width="20" height="14" viewBox="0 0 20 14"><ellipse cx="11" cy="8" rx="8.5" ry="5" fill="#b8bcbc" stroke="#777" transform="rotate(20 11 8)" /><path d="M1 1C3 0 4 2 5 3" fill="none" stroke="#ccc" /></svg>
          } />
          <div className="w-[9px] shrink-0" />
          <TaskItem className="w-[99px]" text="Cisco Webex Me..." icon={
            <svg width="18" height="18" viewBox="0 0 18 18"><circle cx="9" cy="9" r="8" fill="#fff" stroke="#1f87c9" strokeWidth="2" /><path d="M4 11C6 13 12 13 14 7C11 8 7 8 4 11Z" fill="#6cc04a" /></svg>
          } />
          <div className="w-[4px] shrink-0" />
          <div className="flex h-full w-[106px] shrink-0 items-center gap-[4px] border-b-2 border-[#7f9ab0] bg-[#4a5a57] pl-[10px]">
            <svg width="18" height="18" viewBox="0 0 18 18"><rect x="5" y="1" width="13" height="16" fill="#21a366" /><rect x="11" y="1" width="7" height="8" fill="#33c481" /><rect x="5" y="9" width="6" height="8" fill="#107c41" /><rect x="0" y="4" width="10" height="10" fill="#185c37" /><path d="M3 6.5L7 11.5M7 6.5L3 11.5" stroke="#fff" /></svg>
            <span className="whitespace-nowrap text-[9.5px] text-[#e8ecea]">AppW Archive - ...</span>
          </div>
          <ChevronUp className="ml-[8px] h-[13px] w-[13px] text-[#dfe5e3]" strokeWidth={1.3} />
          <svg width="13" height="8" viewBox="0 0 13 8" className="ml-[13px]"><path d="M3 8C0 8 0 4 3 4C3 1 8 0 9 3C12 3 14 8 10 8Z" fill="#2f97e0" /></svg>
          <svg width="12" height="10" viewBox="0 0 12 10" className="ml-[7px]"><rect x="2" y="1" width="10" height="8" fill="#e4e8e6" /><rect x="0" y="0" width="2" height="3" fill="#e4e8e6" /></svg>
          <Volume1 className="ml-[8px] h-[13px] w-[13px] text-[#dfe5e3]" strokeWidth={1.2} />
          <div className="ml-[19px] flex w-[50px] flex-col items-center text-[9.5px] leading-[14px] text-[#e8ecea]"><span>1:38 PM</span><span>6/16/2021</span></div>
          <svg width="13" height="13" viewBox="0 0 13 13" className="ml-[6px]"><path d="M0.5 0.5H12.5V10H8L6.5 12L5 10H0.5Z" fill="none" stroke="#dfe5e3" /></svg>
        </div>
      </div>
    </div>
  )
}
